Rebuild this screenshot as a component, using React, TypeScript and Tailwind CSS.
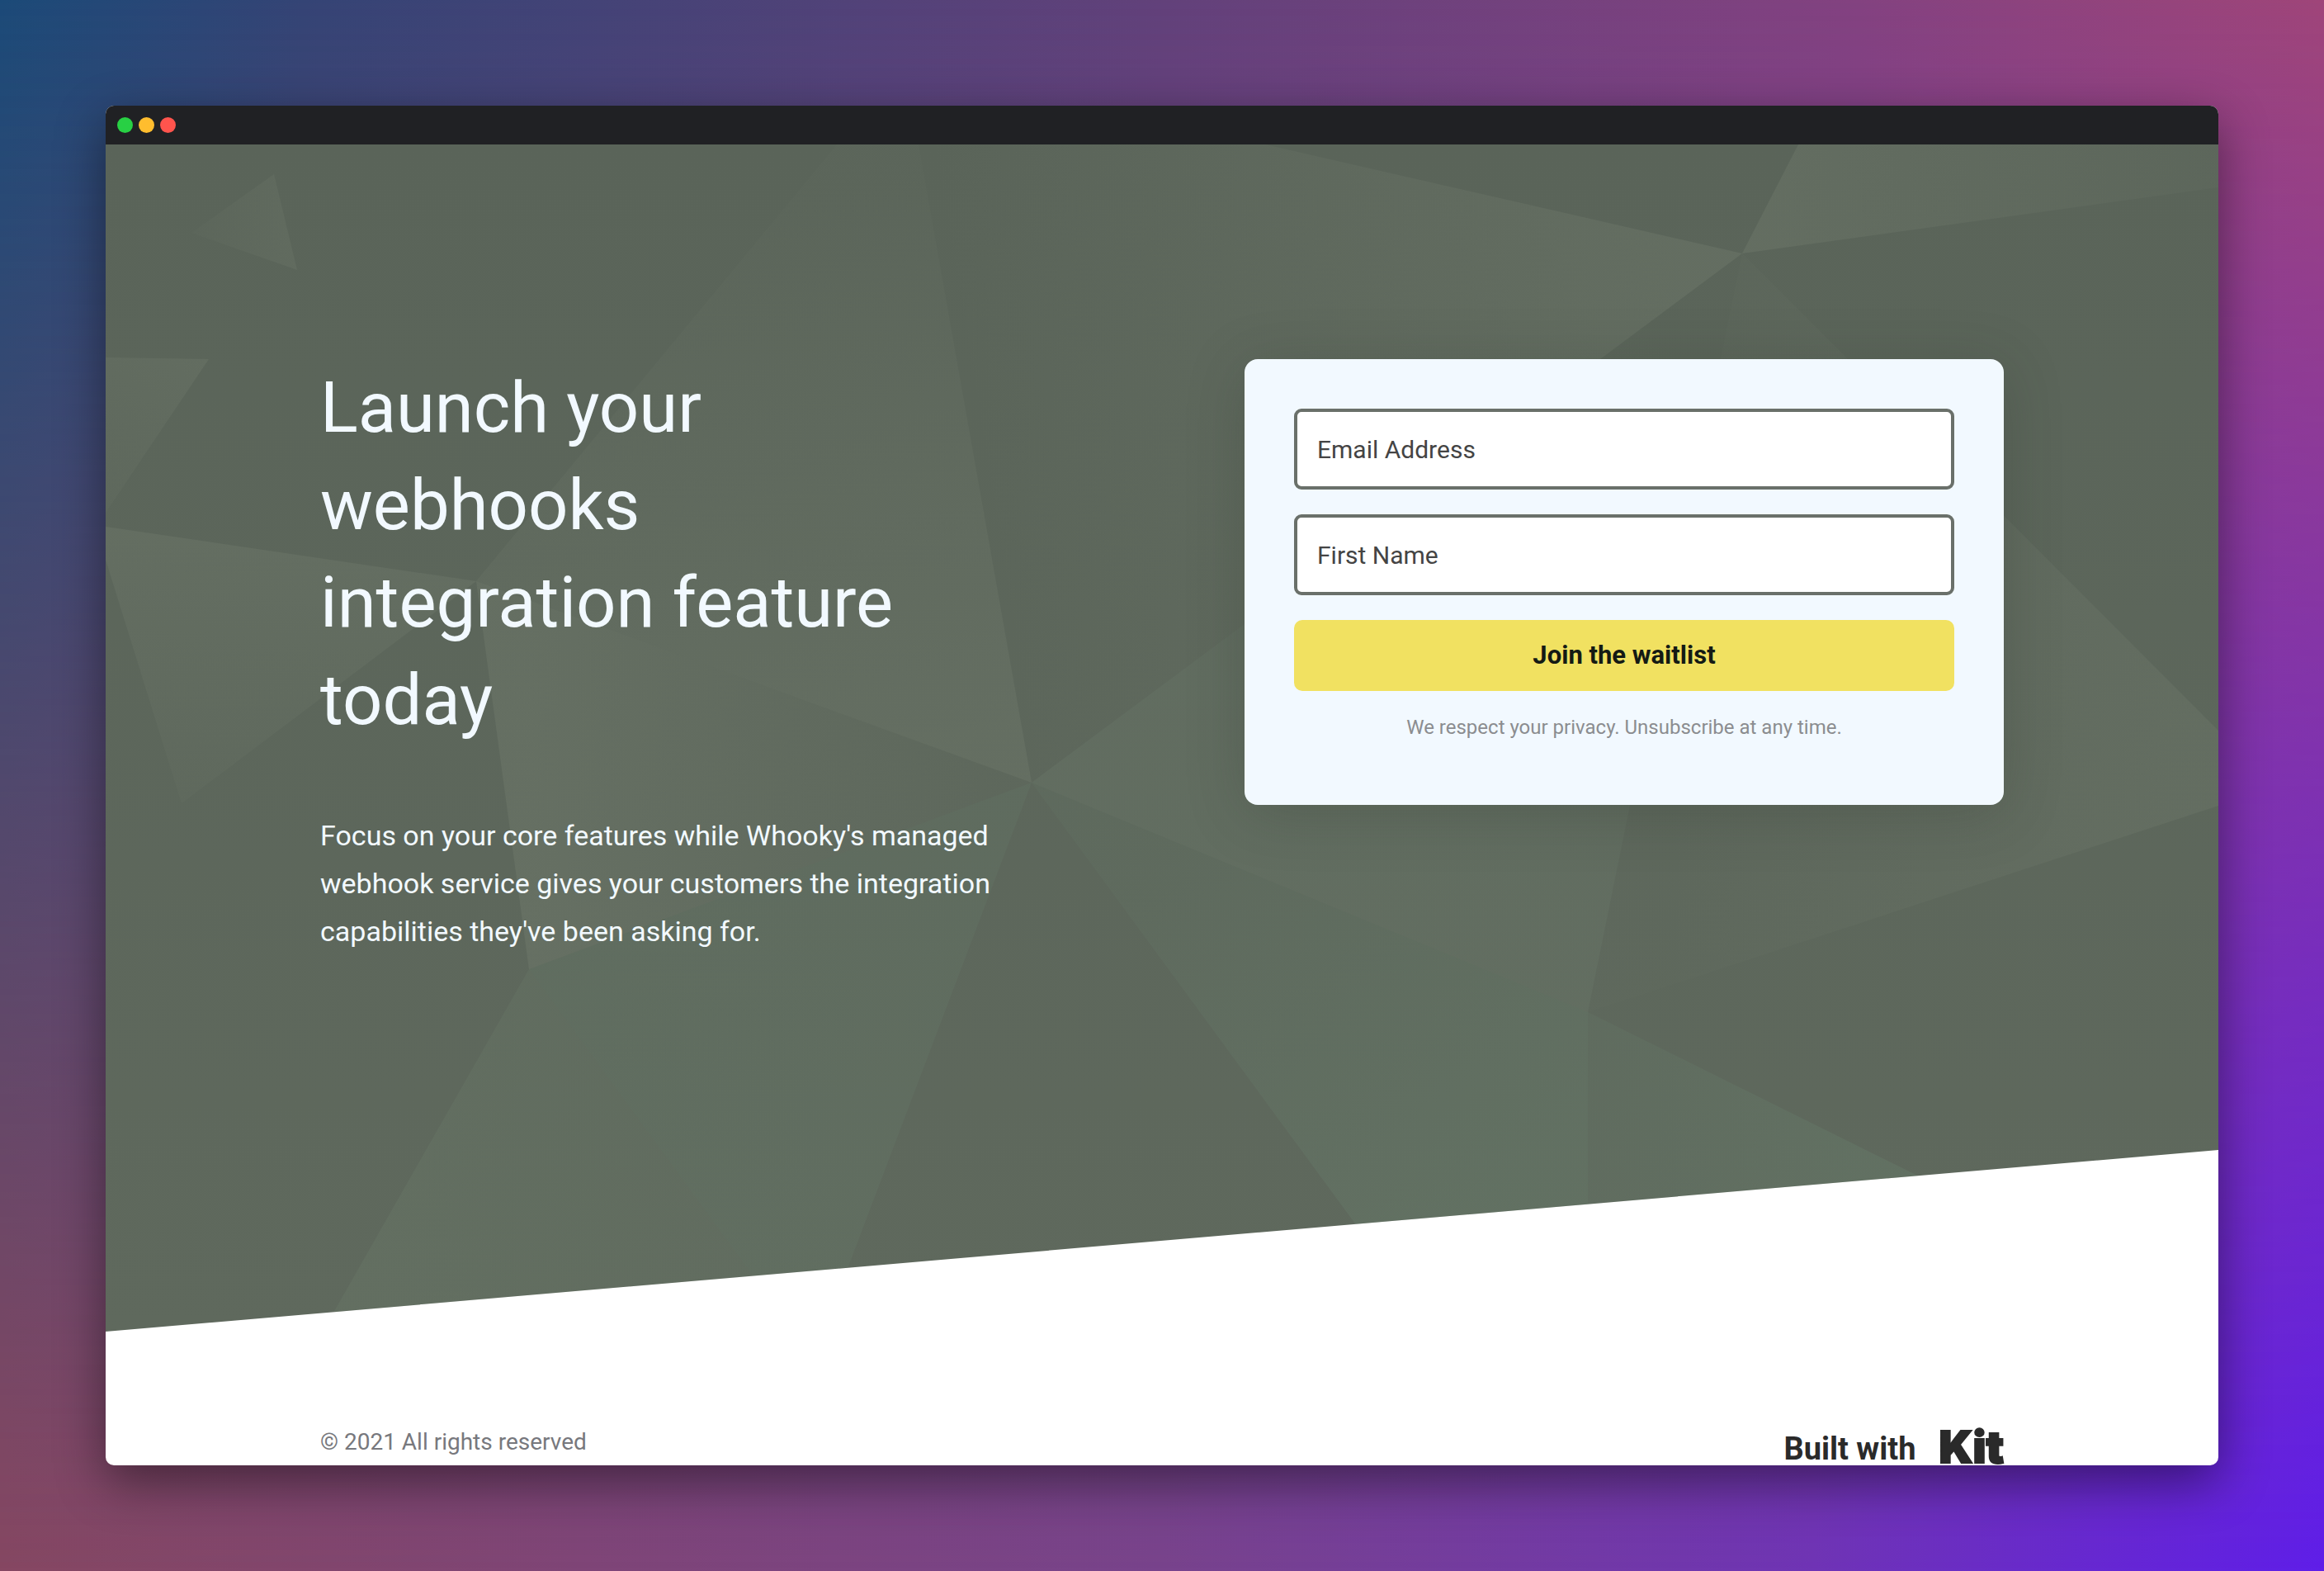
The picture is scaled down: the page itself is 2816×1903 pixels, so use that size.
import React from "react";

type Facet = {
  points: string;
  from: [number, number];
  to: [number, number];
  color: string;
  start: number;
  end: number;
};

const facets: Facet[] = [
  { points: "104,107 204,36 232,152", from: [104, 107], to: [232, 107], color: "#8c9684", start: 0.03, end: 0.13 },
  { points: "0,258 125,260 0,446", from: [125, 260], to: [0, 446], color: "#8c9684", start: 0.16, end: 0.05 },
  { points: "0,463 449,529 92,798 0,503", from: [150, 470], to: [120, 790], color: "#8c9684", start: 0.17, end: 0.05 },
  { points: "449,529 886,0 985,0 1122,773", from: [886, 60], to: [1050, 720], color: "#8c9684", start: 0.03, end: 0.16 },
  { points: "449,529 1122,773 513,999", from: [520, 760], to: [1090, 760], color: "#8c9684", start: 0.18, end: 0.02 },
  { points: "513,999 1122,773 870,1438 834,1438", from: [560, 1150], to: [1040, 1000], color: "#6f9078", start: 0.14, end: 0.12 },
  { points: "513,999 834,1438 263,1438", from: [360, 1200], to: [680, 1200], color: "#7a9279", start: 0.14, end: 0.1 },
  { points: "985,0 1405,0 1983,132 1122,773", from: [1040, 300], to: [1900, 160], color: "#8c9684", start: 0, end: 0.18 },
  { points: "1983,132 2051,0 2560,0 2560,52", from: [2020, 80], to: [2560, 20], color: "#8c9684", start: 0.18, end: 0.05 },
  { points: "1983,132 2560,710 2560,801 1796,1051", from: [1900, 700], to: [2500, 720], color: "#8c9684", start: 0.02, end: 0.14 },
  { points: "1122,773 1983,132 1796,1051", from: [1900, 240], to: [1560, 780], color: "#7f9480", start: 0, end: 0.14 },
  { points: "1122,773 1796,1051 1796,1438 1610,1438", from: [1300, 860], to: [1620, 1300], color: "#6f9078", start: 0.08, end: 0.2 },
  { points: "1796,1051 2480,1390 1796,1390", from: [1790, 1200], to: [2120, 1200], color: "#6f9078", start: 0.1, end: 0.2 },
];

function Facets() {
  return (
    <svg
      className="absolute inset-0 h-full w-full"
      viewBox="0 0 2560 1438"
      preserveAspectRatio="none"
      aria-hidden="true"
    >
      <defs>
        {facets.map((f, i) => (
          <linearGradient
            key={i}
            id={`facet-${i}`}
            gradientUnits="userSpaceOnUse"
            x1={f.from[0]}
            y1={f.from[1]}
            x2={f.to[0]}
            y2={f.to[1]}
          >
            <stop offset="0" stopColor={f.color} stopOpacity={f.start} />
            <stop offset="1" stopColor={f.color} stopOpacity={f.end} />
          </linearGradient>
        ))}
      </defs>
      {facets.map((f, i) => (
        <polygon key={i} points={f.points} fill={`url(#facet-${i})`} />
      ))}
    </svg>
  );
}

function TitleBar() {
  return (
    <div className="flex h-[47px] items-center gap-[7px] rounded-t-[10px] bg-[#202124] px-3.5">
      <span className="size-[19px] rounded-full bg-[#28d044]" />
      <span className="size-[19px] rounded-full bg-[#ffbd2e]" />
      <span className="size-[19px] rounded-full bg-[#ff544d]" />
    </div>
  );
}

function Field({ label, type }: { label: string; type: string }) {
  return (
    <input
      type={type}
      aria-label={label}
      placeholder={label}
      className="block h-[98px] w-full rounded-[9px] border-4 border-[#6a706a] bg-white px-6 text-[30px] text-[#444444] outline-none placeholder:text-[#444444] placeholder:opacity-100"
    />
  );
}

function SignupCard() {
  return (
    <form
      className="w-[920px] shrink-0 rounded-2xl bg-[#f2f9ff] px-[60px] pt-[60px] pb-[74px] shadow-[0_10px_70px_rgba(40,50,40,0.24)]"
      onSubmit={(e) => e.preventDefault()}
    >
      <div className="flex flex-col gap-[30px]">
        <Field label="Email Address" type="email" />
        <Field label="First Name" type="text" />
        <button
          type="submit"
          className="h-[86px] w-full rounded-[10px] bg-[#f1e161] text-[31px] font-bold text-[#141a14]"
        >
          Join the waitlist
        </button>
      </div>
      <p className="mt-6 text-center text-2xl leading-10 text-[#8b8d90]">
        We respect your privacy. Unsubscribe at any time.
      </p>
    </form>
  );
}

export default function App() {
  return (
    <div className="relative isolate min-h-screen bg-[linear-gradient(90deg,#864762_0%,#78438c_50%,#6f34b5_78%,#5f1ee9_100%)] p-32 font-[Roboto,sans-serif]">
      <div className="absolute inset-0 -z-10 bg-[linear-gradient(90deg,#1b4a78_0%,#344475_13%,#62417a_50%,#834280_80%,#9f4579_100%)] [mask-image:linear-gradient(to_bottom,black,transparent)]" />
      <div className="rounded-[10px] bg-white shadow-[0_20px_60px_rgba(0,0,0,0.45)]">
        <TitleBar />
        <main className="relative bg-linear-to-b from-[#5a6459] to-[#5f695d] px-[260px] pt-[260px] pb-[456px] [clip-path:polygon(0_0,100%_0,100%_84.7%,0_100%)]">
          <Facets />
          <div className="relative flex items-start justify-between">
            <div className="text-[#f2f9ff]">
              <h1 className="text-[85px] leading-[118px]">
                Launch your
                <br />
                webhooks
                <br />
                integration feature
                <br />
                today
              </h1>
              <p className="mt-[76px] w-[840px] text-[34px] leading-[58px]">
                Focus on your core features while Whooky's managed webhook service gives your customers the
                integration capabilities they've been asking for.
              </p>
            </div>
            <SignupCard />
          </div>
        </main>
        <footer className="flex items-end justify-between px-[260px] pt-[114px]">
          <p className="mb-2 text-[28px] leading-10 text-[#77787d]">© 2021 All rights reserved</p>
          <a href="#" className="flex items-end gap-7 whitespace-nowrap text-[#2a2a2a]">
            <span className="text-[38px] leading-10 font-bold">Built with</span>
            <span className="font-[Inter,sans-serif] text-[54px] leading-[44px] font-black [-webkit-text-stroke:2px_#2a2a2a]">
              Kit
            </span>
          </a>
        </footer>
      </div>
    </div>
  );
}
